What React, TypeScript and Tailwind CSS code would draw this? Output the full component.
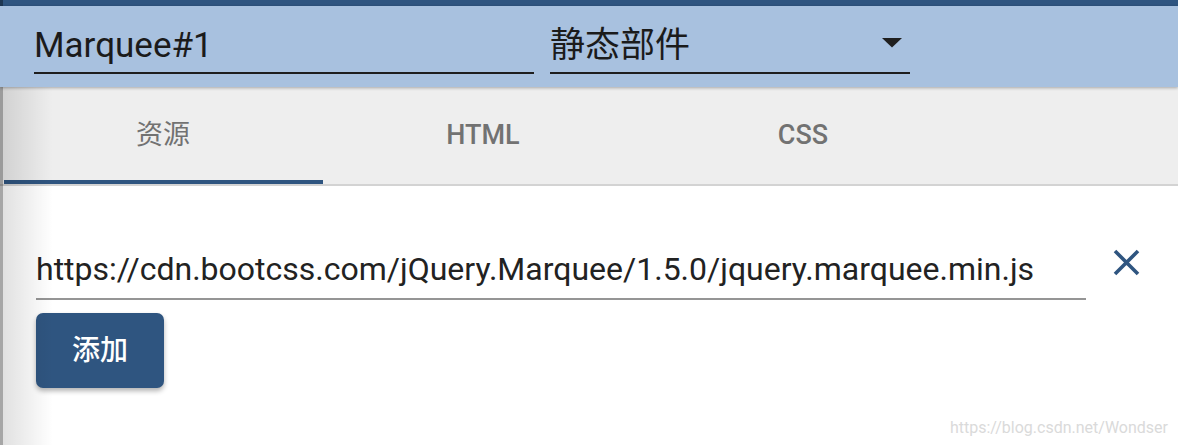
import React from 'react'

const latin = "font-['Roboto','Noto_Sans_CJK_SC',sans-serif]"

function Field({ value, width, dropdown }: { value: string; width: string; dropdown?: boolean }) {
  return (
	<div className={`${width} flex flex-col`}>
	  <div className="flex items-start justify-between pb-[5px]">
		<span className="text-[35px] leading-[42px] text-[#1b1b1b]">{value}</span>
		{dropdown && (
		  <svg width="20" height="10" viewBox="0 0 20 10" className="mt-[13px] mr-[8px]">
			<path d="M0 0 L20 0 L10 9.5 Z" fill="#1f1f1f" />
		  </svg>
		)}
	  </div>
	  <div className="h-[2px] bg-[#1e1e1e]" />
	</div>
  )
}

function Tab({ label, active, cjk }: { label: string; active?: boolean; cjk?: boolean }) {
  return (
	<div className="relative w-[320px] h-full flex items-center justify-center">
	  <span
		className={`text-[27px] text-[#727272] ${cjk ? 'font-normal' : 'font-medium'}`}
	  >
		{label}
	  </span>
	  {active && <div className="absolute left-[1px] right-0 bottom-0 h-[4px] bg-[#2f5580]" />}
	</div>
  )
}

export default function App() {
  return (
	<div className={`relative w-[1178px] h-[445px] overflow-hidden bg-white flex flex-col ${latin}`}>
	  <div className="h-[6px] bg-[#2f5580]" />

	  {/* name + type */}
	  <div className="relative z-10 h-[81px] bg-[#a8c1df] shadow-[0_1px_3px_rgba(0,0,0,0.3)] flex items-start gap-[16px] pl-[34px] pt-[19px]">
		<Field value="Marquee#1" width="w-[500px]" />
		<Field value="静态部件" width="w-[360px]" dropdown />
	  </div>

	  {/* tabs */}
	  <div className="h-[97px] bg-[#eeeeee] flex pl-[3px]">
		<Tab label="资源" active cjk />
		<Tab label="HTML" />
		<Tab label="CSS" />
	  </div>
	  <div className="h-[2px] bg-[#d3d3d3]" />

	  {/* resources */}
	  <div className="flex-1 flex flex-col items-start pl-[36px] pt-[64px]">
		<div className="flex items-start">
		  <div className="w-[1050px] flex flex-col">
			<span className="text-[32px] leading-[38px] text-[#222] pb-[10px]">
			  https://cdn.bootcss.com/jQuery.Marquee/1.5.0/jquery.marquee.min.js
			</span>
			<div className="h-[2px] bg-[#959595]" />
		  </div>
		  <button className="ml-[27px] -mt-[1px] w-[27px] h-[27px]">
			<svg width="27" height="27" viewBox="0 0 27 27">
			  <path d="M2 2 L25 25 M25 2 L2 25" stroke="#2f5580" strokeWidth="3.6" />
			</svg>
		  </button>
		</div>
		<button className="mt-[13px] w-[128px] h-[75px] rounded-[7px] bg-[#2f5580] text-white text-[28px] font-medium shadow-[0_3px_5px_rgba(0,0,0,0.3)]">
		  添加
		</button>
	  </div>

	  {/* left edge shading */}
	  <div className="absolute left-0 top-0 bottom-0 w-[3px] bg-black/35" />
	  <div className="absolute left-[3px] top-[6px] bottom-0 w-[50px] bg-gradient-to-r from-black/12 to-transparent" />

	  <span className="absolute right-[10px] bottom-[5px] text-[16px] text-[#dadada]">
		https://blog.csdn.net/Wondser
	  </span>
	</div>
  )
}
